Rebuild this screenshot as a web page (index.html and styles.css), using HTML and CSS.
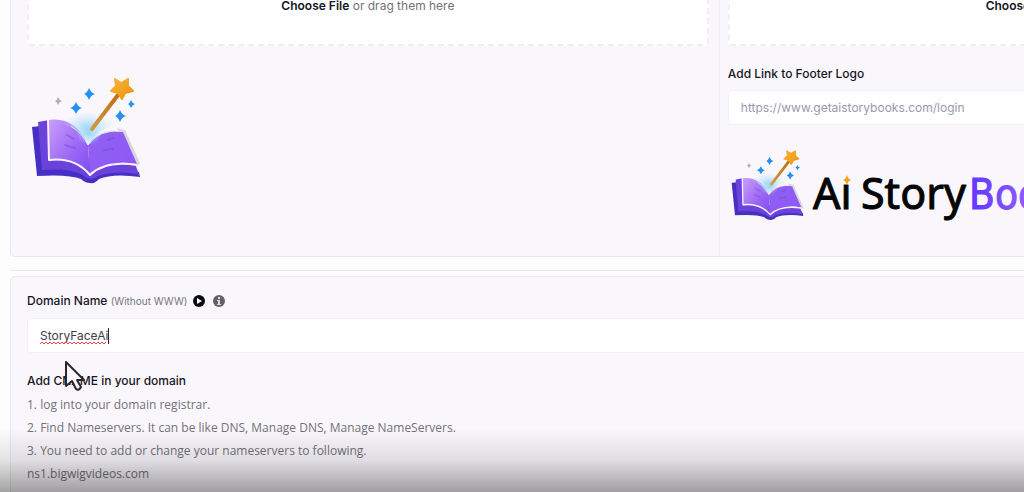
FILE: index.html
```html
<!DOCTYPE html>
<html lang="en">
<head>
    <meta charset="UTF-8">
    <meta name="viewport" content="width=device-width, initial-scale=1.0">
    <title>Domain Settings</title>
    <link rel="stylesheet" href="styles.css">
</head>
<body>
    <!-- shared book artwork -->
    <svg class="defs" aria-hidden="true">
        <defs>
            <linearGradient id="pageLeft" x1="0" y1="0" x2="1" y2="1">
                <stop offset="0" stop-color="#c9a0fd"/>
                <stop offset="0.6" stop-color="#9a66f5"/>
                <stop offset="1" stop-color="#7f4df0"/>
            </linearGradient>
            <linearGradient id="pageRight" x1="0" y1="0" x2="1" y2="1">
                <stop offset="0" stop-color="#9063ee"/>
                <stop offset="1" stop-color="#8f55fb"/>
            </linearGradient>
            <linearGradient id="wand" x1="1" y1="0" x2="0" y2="1">
                <stop offset="0" stop-color="#c06f10"/>
                <stop offset="1" stop-color="#d09a45"/>
            </linearGradient>
            <radialGradient id="glow">
                <stop offset="0" stop-color="#8fd3fa" stop-opacity="0.9"/>
                <stop offset="1" stop-color="#c5e6fa" stop-opacity="0"/>
            </radialGradient>
            <linearGradient id="star" x1="0" y1="0" x2="1" y2="1">
                <stop offset="0" stop-color="#f9b339"/>
                <stop offset="1" stop-color="#e8960f"/>
            </linearGradient>
            <linearGradient id="brand" x1="0" y1="0" x2="1" y2="0">
                <stop offset="0" stop-color="#6237ff"/>
                <stop offset="1" stop-color="#b77bff"/>
            </linearGradient>
        </defs>
        <symbol id="book" viewBox="0 0 110 106">
            <path fill="#4630c4" d="M1 49L9 48L14 90L50 92L108 94L109 99Q82 95 68 101Q64 106 59 105Q54 105 50 101Q38 96 6 98Z"/>
            <path fill="#6b43dc" d="M7 44L18 42L22 80L104 86L108 96Q82 92 67 98Q60 104 52 97Q38 90 11 92Z"/>
            <path fill="#d9d5e0" d="M86 50L94 52L109 85L106 89Z"/>
            <path fill="url(#pageLeft)" d="M17 42Q44 38 57 67L59 96Q44 79 18 83Z"/>
            <path fill="url(#pageRight)" d="M57 67Q68 50 92 54L106 86Q75 81 59 96Z"/>
            <path fill="none" stroke="#f6f1fd" stroke-width="2" stroke-linejoin="round" d="M17 42L18 82Q44 79 59 97Q74 82 106 87"/>
            <path fill="none" stroke="#eee7fc" stroke-width="1" d="M40 48Q51 55 57 67Q68 51 92 53"/>
            <path fill="url(#glow)" d="M30 45Q46 32 60 33Q78 32 84 49Q68 50 57 67Q51 52 30 45Z"/>
            <ellipse cx="58" cy="55" rx="13" ry="12" fill="url(#glow)"/>
            <path fill="none" stroke="#6f43cf" stroke-width="2" stroke-linecap="round" opacity="0.4" d="M36 57l7 4M34 67l10 3M77 62l6-2M73 72l9-1"/>
            <path fill="none" stroke="url(#wand)" stroke-width="4" stroke-linecap="round" d="M61 51L87 17"/>
            <path fill="url(#star)" stroke="url(#star)" stroke-width="2" stroke-linejoin="round" d="M84 1L90 5L97 1L97 8L102 13L94 15L91 21L87 15L80 13L85 8Z"/>
            <path fill="#2590f2" d="M58 10Q60 15 64 16Q60 17 58 22Q56 17 53 16Q56 15 58 10ZM45 24Q47 29 51 30Q47 31 45 36Q43 31 39 30Q43 29 45 24ZM89 32Q91 37 95 38Q91 39 89 44Q87 39 84 38Q87 37 89 32ZM100 22Q101 25 104 26Q101 27 100 30Q99 27 97 26Q99 25 100 22Z"/>
            <path fill="#aeb0b6" d="M27 19Q28 22 31 23Q28 24 27 27Q26 24 24 23Q26 22 27 19Z"/>
        </symbol>
    </svg>

    <main class="page">
        <section class="logos panel">
            <div class="column">
                <label class="dropzone">
                    <input type="file" class="file">
                    <span><b>Choose File</b> or drag them here</span>
                </label>
                <svg class="logo-mark" role="img" aria-label="Book logo"><use href="#book"/></svg>
            </div>
            <div class="column">
                <label class="dropzone">
                    <input type="file" class="file">
                    <span><b>Choose File</b> or drag them here</span>
                </label>
                <label class="title link-title" for="footer-link">Add Link to Footer Logo</label>
                <input class="field" id="footer-link" type="text" placeholder="https://www.getaistorybooks.com/login">
                <svg class="logo-full" viewBox="0 0 380 80">
                    <use href="#book" x="3" y="6" width="73" height="71"/>
                    <text class="logo-text" x="85" y="65">Ai</text>
                    <path fill="#faf7fc" d="M112 26h13v14h-13z"/>
                    <path fill="#f5a01c" d="M119 31Q120 35 123 36Q120 37 119 41Q118 37 115 36Q118 35 119 31Z"/>
                    <text class="logo-text" x="133" y="65">Story</text>
                    <text class="logo-books" x="241" y="65">Books</text>
                </svg>
            </div>
        </section>

        <hr class="divider">

        <section class="domain panel">
            <div class="label-row">
                <label class="title" for="domain">Domain Name <span class="hint">(Without WWW)</span></label>
                <button class="icon-button" type="button" aria-label="Watch video">
                    <svg viewBox="0 0 12 12"><circle cx="6" cy="6" r="6" fill="#0b0a14"/><path d="M4 3L9 6L4 9Z" fill="#fff"/></svg>
                </button>
                <button class="icon-button info" type="button" aria-label="Information">
                    <svg viewBox="0 0 12 12"><circle cx="6" cy="6" r="6" fill="#626167"/><path d="M5 2h2v2H5zM4 5h3v4h1v1H4V9h1V6H4z" fill="#dddce0"/></svg>
                </button>
            </div>
            <div class="field typed">
                <input class="typed-input" id="domain" type="text" value="StoryFaceAi" spellcheck="false">
                <svg class="squiggle" aria-hidden="true">
                    <defs>
                        <pattern id="wave" width="4" height="4" patternUnits="userSpaceOnUse">
                            <path d="M0 3L2 1L4 3" fill="none" stroke="#ee3f50"/>
                        </pattern>
                    </defs>
                    <rect width="100%" height="4" fill="url(#wave)"/>
                </svg>
                <span class="caret"></span>
            </div>
            <h2 class="title">Add CNAME in your domain</h2>
            <div class="steps">
                <p>1. log into your domain registrar.</p>
                <p>2. Find Nameservers. It can be like DNS, Manage DNS, Manage NameServers.</p>
                <p>3. You need to add or change your nameservers to following.</p>
                <p>ns1.bigwigvideos.com</p>
            </div>
        </section>
    </main>

    <div class="shade"></div>
    <svg class="cursor" viewBox="0 0 22 32" aria-hidden="true">
        <path d="M2 2V26L8 21L12 29Q15 31 17 27L13 20H20Z" fill="#faf8fc" stroke="#29282c" stroke-width="2" stroke-linejoin="round"/>
    </svg>
</body>
</html>
```

FILE: styles.css
```css
* {
    box-sizing: border-box;
}
body {
    margin: 0;
    height: 100vh;
    overflow: hidden;
    position: relative;
    background: #fefdfe;
    color: #737178;
    font-family: Inter, "Open Sans", sans-serif;
    font-size: 12px;
}
.defs {
    position: absolute;
    width: 0;
    height: 0;
}
/* the form is wider than the window and runs off to the right */
.page {
    width: 140vw;
    padding: 0 6px 0 10px;
}
.panel {
    background: #faf7fc;
    border: 1px solid #e9e7eb;
    border-radius: 5px;
}
.logos {
    display: grid;
    grid-template-columns: 1fr 1fr;
    border-top: none;
    border-radius: 0 0 5px 5px;
}
.column {
    display: flex;
    flex-direction: column;
    padding: 0 10px 32px 16px;
}
.column + .column {
    padding-left: 8px;
    border-left: 1px solid #efedf1;
}
.dropzone {
    display: block;
    height: 46px;
    background: #fff;
    border: 2px dashed #f0eef2;
    border-top: none;
    border-radius: 0 0 5px 5px;
    text-align: center;
    line-height: 12px;
    cursor: pointer;
}
.file {
    position: absolute;
    opacity: 0;
    width: 1px;
    height: 1px;
}
b {
    color: #15131f;
    font-weight: 600;
}
.title {
    margin: 0;
    color: #17151f;
    font-size: 12px;
    font-weight: 500;
    line-height: 20px;
}
.link-title {
    margin: 18px 0 6px;
}
.field {
    width: 100%;
    height: 35px;
    padding: 0 12px;
    background: #fff;
    border: 1px solid #f3f0f5;
    border-radius: 4px;
    font: inherit;
    color: #3f3c46;
}
.field::placeholder {
    color: #9b98ae;
    opacity: 1;
}
.logo-mark {
    width: 110px;
    height: 106px;
    margin: 32px 0 0 4px;
}
.logo-full {
    width: 380px;
    height: 80px;
    margin-top: 19px;
}
.logo-text {
    font-family: "Noto Sans", sans-serif;
    font-size: 43px;
    fill: #050505;
    stroke: #050505;
    stroke-width: 1px;
    stroke-linejoin: round;
}
.logo-books {
    font-family: "Liberation Sans Narrow", "DejaVu Sans Condensed", sans-serif;
    font-size: 42px;
    fill: url(#brand);
    stroke: url(#brand);
    stroke-width: 1px;
    stroke-linejoin: round;
}
.divider {
    margin: 13px 0 5px;
    border: none;
    border-top: 1px solid #e9e7eb;
}
.domain {
    padding: 14px 16px;
}
.label-row {
    display: flex;
    align-items: center;
    gap: 6px;
    margin-bottom: 7px;
}
.hint {
    color: #77757c;
    font-size: 10px;
    font-weight: 400;
}
.icon-button {
    display: flex;
    width: 12px;
    height: 12px;
    padding: 0;
    border: none;
    background: none;
    cursor: pointer;
}
.icon-button svg {
    width: 12px;
    height: 12px;
}
.info {
    margin-left: 2px;
}
.typed {
    position: relative;
    display: flex;
    margin-bottom: 18px;
}
.typed-input {
    width: 100%;
    padding: 0;
    border: none;
    outline: none;
    background: none;
    font: inherit;
    color: inherit;
}
.squiggle {
    position: absolute;
    left: 12px;
    bottom: 7px;
    width: 66px;
    height: 4px;
}
.caret {
    position: absolute;
    left: 80px;
    top: 9px;
    width: 1px;
    height: 16px;
    background: #29282c;
}
.steps {
    display: grid;
    gap: 3px;
    margin-top: 4px;
    font-family: "Open Sans", sans-serif;
    line-height: 20px;
}
.steps p {
    margin: 0;
}
.shade {
    position: absolute;
    left: 0;
    right: 0;
    bottom: 0;
    height: 64px;
    background: linear-gradient(rgba(0, 0, 0, 0), rgba(0, 0, 0, 0.1) 50%, rgba(0, 0, 0, 0.36));
    pointer-events: none;
}
.cursor {
    position: absolute;
    left: 64px;
    top: 360px;
    width: 22px;
    height: 32px;
}
```
